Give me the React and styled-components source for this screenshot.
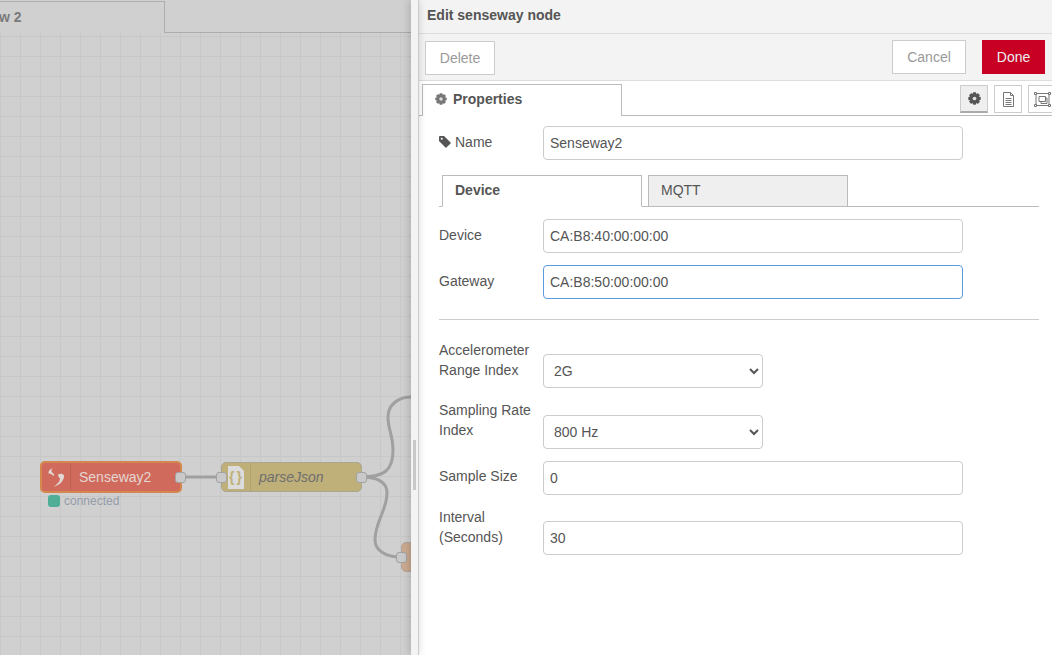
import styled, { createGlobalStyle } from "styled-components";

const GlobalStyle = createGlobalStyle`
  html, body {
    margin: 0;
    padding: 0;
    height: 100%;
    overflow: hidden;
  }
  body {
    font-family: "Liberation Sans", Arial, sans-serif;
    font-size: 14px;
    color: #555;
  }
`;

const Page = styled.div`
  display: flex;
  width: 1052px;
  height: 655px;
  overflow: hidden;
`;

/* workspace side */
const Workspace = styled.div`
  width: 411px;
  flex: none;
  display: flex;
  flex-direction: column;
  background: #d0d0d0;
`;

const FlowTabs = styled.div`
  height: 33px;
  flex: none;
  display: flex;
  box-sizing: border-box;
  padding-top: 1px;
  border-bottom: 1px solid #adadad;
`;

const FlowTab = styled.div`
  width: 165px;
  height: 32px;
  box-sizing: border-box;
  padding-top: 7px;
  text-indent: -1px;
  border-top: 1px solid #adadad;
  border-right: 1px solid #adadad;
  background: #d0d0d0;
  color: #7a7a7a;
  font-size: 14px;
  font-weight: 700;
  line-height: 16px;
  overflow: hidden;
`;

const Canvas = styled.div`
  position: relative;
  flex: 1;
  overflow: hidden;
  background-color: #d0d0d0;
  background-image:
    linear-gradient(#c8c8c8 1px, transparent 1px),
    linear-gradient(90deg, #c8c8c8 1px, transparent 1px);
  background-size: 20px 20px;
  background-position: 0 3px;
`;

const Wires = styled.svg`
  position: absolute;
  inset: 0;
  width: 411px;
  height: 622px;
`;

const Node = styled.div`
  position: absolute;
  left: ${({ $left }) => $left}px;
  top: ${({ $top }) => $top}px;
  width: ${({ $width }) => $width}px;
  height: ${({ $height }) => $height}px;
  box-sizing: border-box;
  display: flex;
  align-items: center;
  border-radius: 5px;
  border: ${({ $border }) => $border};
  background: ${({ $color }) => $color};
`;

const NodeIcon = styled.div`
  width: ${({ $width }) => $width}px;
  height: 100%;
  flex: none;
  box-sizing: border-box;
  display: flex;
  align-items: center;
  justify-content: center;
  border-right: 1px solid rgba(0, 0, 0, 0.08);
`;

const NodeLabel = styled.span`
  margin-left: ${({ $gap }) => $gap}px;
  font-size: 14px;
  font-style: ${({ $italic }) => ($italic ? "italic" : "normal")};
  color: ${({ $color }) => $color};
  line-height: 16px;
`;

const Port = styled.div`
  position: absolute;
  top: calc(50% - 5px);
  ${({ $side }) => $side}: -6px;
  width: 11px;
  height: 11px;
  box-sizing: border-box;
  background: #c9c9c9;
  border: 1px solid #a3a3a3;
  border-radius: 3px;
`;

const Status = styled.div`
  position: absolute;
  left: 48px;
  top: 461px;
  display: flex;
  align-items: center;
  gap: 4px;
  font-size: 12px;
  line-height: 14px;
  color: #939ca9;
`;

const StatusDot = styled.span`
  width: 12px;
  height: 12px;
  border-radius: 3px;
  background: #4fae96;
`;

/* edit tray */
const Divider = styled.div`
  width: 8px;
  flex: none;
  position: relative;
  background: #f3f3f3;
  border-right: 1px solid #ccc;
  box-sizing: border-box;
  box-shadow: -1px 0 8px rgba(0, 0, 0, 0.2);
`;

const Grip = styled.div`
  position: absolute;
  left: 2px;
  top: 440px;
  width: 3px;
  height: 50px;
  background: #c8c8c8;
`;

const Tray = styled.div`
  flex: 1;
  min-width: 0;
  display: flex;
  flex-direction: column;
  background: #fff;
`;

const TrayTitle = styled.div`
  height: 34px;
  flex: none;
  box-sizing: border-box;
  padding: 0 8px 4px;
  display: flex;
  align-items: center;
  background: #f3f3f3;
  border-bottom: 1px solid #ddd;
  font-size: 14px;
  font-weight: 700;
  color: #555;
`;

const TrayToolbar = styled.div`
  height: 47px;
  flex: none;
  box-sizing: border-box;
  padding: 6px 7px 0 6px;
  display: flex;
  justify-content: space-between;
  background: #f3f3f3;
  border-bottom: 1px solid #ddd;
`;

const ButtonGroup = styled.div`
  display: flex;
  gap: 16px;
`;

const ActionButton = styled.button`
  height: 34px;
  width: ${({ $width }) => $width}px;
  margin-top: ${({ $drop }) => ($drop ? 1 : 0)}px;
  box-sizing: border-box;
  padding: 0;
  font-family: inherit;
  font-size: 14px;
  border-radius: 0;
  border: 1px solid ${({ $primary }) => ($primary ? "#c70024" : "#ccc")};
  background: ${({ $primary }) => ($primary ? "#c70024" : "#fff")};
  color: ${({ $primary }) => ($primary ? "#eee" : "#999")};
`;

const PropTabs = styled.div`
  height: 35px;
  flex: none;
  box-sizing: border-box;
  display: flex;
  justify-content: space-between;
  padding: 3px 0 0 3px;
  border-bottom: 1px solid #bbb;
`;

const PropTab = styled.div`
  width: 200px;
  height: 32px;
  box-sizing: border-box;
  display: flex;
  align-items: center;
  gap: 6px;
  padding: 0 12px 4px;
  background: #fff;
  border: 1px solid #bbb;
  border-bottom: none;
  font-weight: 700;
  color: #555;
`;

const SideButtons = styled.div`
  display: flex;
  gap: 6px;
  margin: 1px -4px 0 0;
`;

const SideButton = styled.div`
  width: 28px;
  height: 28px;
  box-sizing: border-box;
  display: flex;
  align-items: center;
  justify-content: center;
  border: 1px solid #ccc;
  border-bottom: ${({ $active }) => ($active ? "2px solid #aaa" : "1px solid #ccc")};
  background: ${({ $active }) => ($active ? "#efefef" : "#fff")};
`;

const Form = styled.div`
  flex: 1;
  display: flex;
  flex-direction: column;
  padding: 10px 13px 0 20px;
`;

const Row = styled.div`
  display: flex;
  align-items: flex-start;
  margin-bottom: ${({ $mb }) => $mb ?? 12}px;
`;

const Label = styled.label`
  width: 104px;
  flex: none;
  margin-top: ${({ $top }) => $top ?? 6}px;
  font-size: 14px;
  line-height: 20px;
  color: #555;
`;

const TagLabel = styled(Label)`
  display: flex;
  align-items: center;
  gap: 4px;
`;

const TextInput = styled.input`
  width: 420px;
  height: 34px;
  margin-top: ${({ $drop }) => $drop ?? 0}px;
  box-sizing: border-box;
  padding: 0 6px;
  font-family: inherit;
  font-size: 14px;
  color: #555;
  background: #fff;
  border: 1px solid ${({ $focused }) => ($focused ? "#5b9be0" : "#ccc")};
  border-radius: 4px;
  outline: none;
`;

const Select = styled.select`
  width: 220px;
  height: 34px;
  margin-top: ${({ $drop }) => $drop ?? 0}px;
  box-sizing: border-box;
  padding: 0 6px;
  font-family: inherit;
  font-size: 14px;
  color: #555;
  background: #fff;
  border: 1px solid #ccc;
  border-radius: 4px;
  outline: none;
`;

const InnerTabs = styled.div`
  height: 32px;
  flex: none;
  box-sizing: border-box;
  display: flex;
  gap: 6px;
  padding-left: 3px;
  margin-bottom: 12px;
  border-bottom: 1px solid #bbb;
`;

const InnerTab = styled.div`
  width: 200px;
  height: 32px;
  box-sizing: border-box;
  padding: 0 12px 3px;
  display: flex;
  align-items: center;
  border: 1px solid #bbb;
  border-bottom: 1px solid ${({ $active }) => ($active ? "#fff" : "#bbb")};
  background: ${({ $active }) => ($active ? "#fff" : "#efefef")};
  font-weight: ${({ $active }) => ($active ? 700 : 400)};
  color: #555;
`;

const Rule = styled.hr`
  width: 100%;
  height: 1px;
  border: none;
  margin: 8px 0 20px;
  background: #ccc;
`;

function Gear({ size = 12, color = "#555" }) {
  const teeth = [0, 45, 90, 135];
  return (
    <svg width={size} height={size} viewBox="0 0 16 16">
      {teeth.map((a) => (
        <rect key={a} x="5.9" y="0.4" width="4.2" height="15.2" rx="1" fill={color} transform={`rotate(${a} 8 8)`} />
      ))}
      <circle cx="8" cy="8" r="6" fill={color} />
      <circle cx="8" cy="8" r="2.3" fill="#dedede" />
    </svg>
  );
}

export default function App() {
  return (
    <Page>
      <GlobalStyle />
      <Workspace>
        <FlowTabs>
          <FlowTab>w 2</FlowTab>
        </FlowTabs>
        <Canvas>
          <Wires viewBox="0 33 411 622">
            <g fill="none" stroke="#a0a0a0" strokeWidth="3">
              <path d="M181 477 H221" />
              <path d="M361 477 C 385 477 393 470 393 450 C 393 435 388 430 388 417 C 388 405 398 397 411 397" />
              <path d="M361 477 C 380 477 387 483 387 493 C 387 510 375 522 375 540 C 375 550 385 557 401 557" />
            </g>
          </Wires>
          <Node $left={40} $top={428} $width={142} $height={32} $color="#cf6a5c" $border="2px solid #d4884e">
            <NodeIcon $width={29}>
              <svg width="20" height="22" viewBox="46 466 20 22">
                <path d="M53 468 C 50 469 48 471 48.5 473.5 C 50 473 52 474.5 54 476 C 55 474 52 473 51.5 471.5 C 51.2 470 52 469 53 468Z" fill="#e2d8d4" />
                <path d="M58 474.5 C 60 473.5 63 473.5 64 475.5 C 64.5 480 60 485 53.5 487 C 56.5 484.5 59.5 482 60 479.5 C 60 477.5 58 477 58 474.5Z" fill="#e2d8d4" />
              </svg>
            </NodeIcon>
            <NodeLabel $gap={8} $color="#e6d6d2">Senseway2</NodeLabel>
            <Port $side="right" />
          </Node>
          <Node $left={221} $top={429} $width={141} $height={30} $color="#bfb07a" $border="1px solid #aaa68f">
            <NodeIcon $width={29}>
              <svg width="16" height="23" viewBox="0 0 16 23">
                <path d="M0 0 H11 L16 5 V23 H0Z" fill="#dcdcdc" />
                <text x="8.5" y="16" textAnchor="middle" fontSize="14" letterSpacing="2" fontFamily="Liberation Sans, sans-serif" fontWeight="700" fill="#c0b077">{"{}"}</text>
              </svg>
            </NodeIcon>
            <NodeLabel $gap={8} $italic $color="#6e6e6e">parseJson</NodeLabel>
            <Port $side="left" />
            <Port $side="right" />
          </Node>
          <Node $left={401} $top={509} $width={60} $height={30} $color="#cbaa90" $border="1px solid #b0a59c">
            <Port $side="left" />
          </Node>
          <Status>
            <StatusDot />
            connected
          </Status>
        </Canvas>
      </Workspace>
      <Divider>
        <Grip />
      </Divider>
      <Tray>
        <TrayTitle>Edit senseway node</TrayTitle>
        <TrayToolbar>
          <ActionButton $width={70} $drop>Delete</ActionButton>
          <ButtonGroup>
            <ActionButton $width={74}>Cancel</ActionButton>
            <ActionButton $width={63} $primary>Done</ActionButton>
          </ButtonGroup>
        </TrayToolbar>
        <PropTabs>
          <PropTab>
            <Gear color="#777" />
            Properties
          </PropTab>
          <SideButtons>
            <SideButton $active><Gear size={13} /></SideButton>
            <SideButton>
              <svg width="13" height="15" viewBox="0 0 13 15" fill="none" stroke="#777">
                <path d="M1.5 .5 H8.5 L11.5 3.5 V14.5 H1.5Z M8.5 .5 V3.5 H11.5 M3.5 6.5 H9.5 M3.5 8.5 H9.5 M3.5 10.5 H9.5 M3.5 12.5 H9.5" />
              </svg>
            </SideButton>
            <SideButton>
              <svg width="17" height="15" viewBox="0 0 17 15" fill="none" stroke="#777">
                <path d="M2 1.5 H15 V13.5 H2Z M5 4.5 H11.5 V9.5 H5Z M7 9.5 V11.5 H13 V6 H11.5" />
                <path d="M.5 .5 h2 v2 h-2z M14.5 .5 h2 v2 h-2z M.5 12.5 h2 v2 h-2z M14.5 12.5 h2 v2 h-2z" fill="#fff" />
              </svg>
            </SideButton>
          </SideButtons>
        </PropTabs>
        <Form>
          <Row $mb={15}>
            <TagLabel>
              <svg width="12" height="12" viewBox="0 0 13 13">
                <path d="M0 1 Q0 0 1 0 H5.5 L12.5 7 Q13 7.5 12.5 8 L8 12.5 Q7.5 13 7 12.5 L0 5.5Z" fill="#555" />
                <circle cx="3" cy="3" r="1.1" fill="#fff" />
              </svg>
              Name
            </TagLabel>
            <TextInput readOnly value="Senseway2" />
          </Row>
          <InnerTabs>
            <InnerTab $active>Device</InnerTab>
            <InnerTab>MQTT</InnerTab>
          </InnerTabs>
          <Row>
            <Label>Device</Label>
            <TextInput readOnly value="CA:B8:40:00:00:00" />
          </Row>
          <Row>
            <Label>Gateway</Label>
            <TextInput readOnly $focused value="CA:B8:50:00:00:00" />
          </Row>
          <Rule />
          <Row>
            <Label $top={0}>Accelerometer<br />Range Index</Label>
            <Select $drop={14} defaultValue="2G"><option>2G</option><option>4G</option></Select>
          </Row>
          <Row>
            <Label $top={0}>Sampling Rate<br />Index</Label>
            <Select $drop={15} defaultValue="800 Hz"><option>800 Hz</option></Select>
          </Row>
          <Row>
            <Label $top={5}>Sample Size</Label>
            <TextInput readOnly value="0" />
          </Row>
          <Row $mb={0}>
            <Label $top={0}>Interval<br />(Seconds)</Label>
            <TextInput $drop={14} readOnly value="30" />
          </Row>
        </Form>
      </Tray>
    </Page>
  );
}
